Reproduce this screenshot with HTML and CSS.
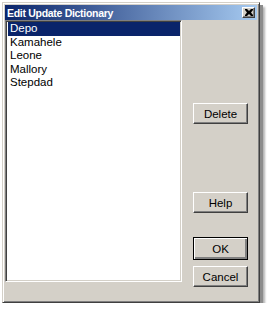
FILE: index.html
```html
<!DOCTYPE html>
<html>
<head>
<meta charset="utf-8">
<link rel="stylesheet" href="styles.css">
</head>
<body>
<div class="window">
  <div class="titlebar">
    <span class="title">Edit Update Dictionary</span>
    <span class="close"><svg width="8" height="7" viewBox="0 0 8 7"><path d="M0 0h2l2 2 2-2h2v1l-2 2.5 2 2.5v1h-2l-2-2-2 2h-2v-1l2-2.5-2-2.5z" fill="#000"/></svg></span>
  </div>
  <div class="content">
    <div class="list">
      <div class="item selected">Depo</div>
      <div class="item">Kamahele</div>
      <div class="item">Leone</div>
      <div class="item">Mallory</div>
      <div class="item">Stepdad</div>
    </div>
    <div class="buttons">
      <div class="btn delete">Delete</div>
      <div class="btn help">Help</div>
      <div class="btn ok">OK</div>
      <div class="btn cancel">Cancel</div>
    </div>
  </div>
</div>
</body>
</html>
```
FILE: styles.css
```css
html, body {
  margin: 0;
  padding: 0;
  background: #ffffff;
}
body {
  font-family: "Liberation Sans", Arial, sans-serif;
  font-size: 11px;
}
.window {
  margin: 2px 0 0 2px;
  width: 258px;
  height: 301px;
  box-sizing: border-box;
  background: #d4d0c8;
  border: 1px solid;
  border-color: #d4d0c8 #404040 #404040 #d4d0c8;
  box-shadow: inset 1px 1px #ffffff, inset -1px -1px #808080, 3px 3px 0 #8c8c8c, 5px 5px 2px rgba(0,0,0,0.3);
  padding: 2px;
  display: flex;
  flex-direction: column;
}
.titlebar {
  height: 15px;
  flex: none;
  background: linear-gradient(to right, #0a246a, #a6caf0);
  display: flex;
  align-items: center;
  justify-content: space-between;
  padding: 0 2px 0 2px;
}
.title {
  color: #ffffff;
  font-weight: bold;
  font-size: 10.5px;
  letter-spacing: -0.3px;
}
.close {
  width: 13px;
  height: 11px;
  box-sizing: border-box;
  background: #d4d0c8;
  border: 1px solid;
  border-color: #ffffff #404040 #404040 #ffffff;
  box-shadow: inset -1px -1px #808080;
  display: flex;
  align-items: center;
  justify-content: center;
}
.close svg { display: block; }
.content {
  flex: 1;
  display: flex;
}
.list {
  width: 177px;
  height: 262px;
  box-sizing: border-box;
  background: #ffffff;
  border: 1px solid;
  border-color: #808080 #ffffff #ffffff #808080;
  box-shadow: inset 1px 1px #404040, inset -1px -1px #d4d0c8;
  padding: 1px 1px 1px 2px;
}
.item {
  height: 13.6px;
  line-height: 13.6px;
  padding-left: 2px;
  color: #000000;
  font-size: 11.5px;
}
.item.selected {
  background: #0a246a;
  color: #ffffff;
}
.buttons {
  display: flex;
  flex-direction: column;
  margin-left: 11px;
  width: 55px;
}
.btn {
  height: 21px;
  box-sizing: border-box;
  border: 1px solid;
  border-color: #ffffff #404040 #404040 #ffffff;
  box-shadow: inset -1px -1px #808080;
  display: flex;
  align-items: center;
  justify-content: center;
  color: #000000;
  font-size: 11.5px;
}
.delete { margin-top: 83px; }
.help { margin-top: 68px; }
.ok {
  margin-top: 24px;
  height: 23px;
  border-color: #000000;
  box-shadow: inset 1px 1px #ffffff, inset -2px -2px #808080, inset -1px -1px #404040;
}
.cancel { margin-top: 6px; }
```
